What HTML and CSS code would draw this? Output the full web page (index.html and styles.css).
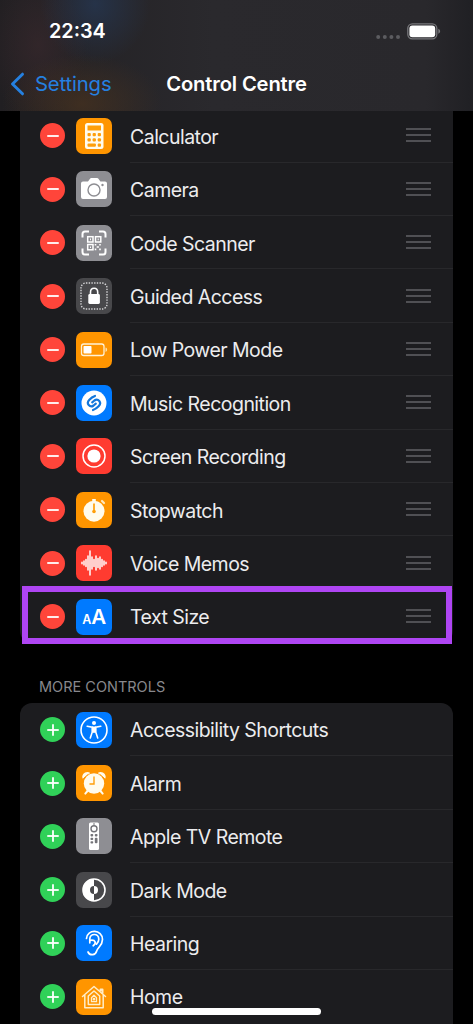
FILE: index.html
```html
<!DOCTYPE html>
<html lang="en-GB">
<head>
<meta charset="utf-8">
<title>Control Centre</title>
<link rel="stylesheet" href="styles.css">
</head>
<body>
<main class="screen">
  <header class="header">
    <div class="status">
      <span class="time">22:34</span>
      <div class="indicators">
        <svg width="24" height="6" viewBox="0 0 24 6" fill="#5c5c60"><circle cx="2.2" cy="3" r="2"/><circle cx="8.8" cy="3" r="2"/><circle cx="15.4" cy="3" r="2"/><circle cx="22" cy="3" r="2"/></svg>
        <svg class="battery" width="34" height="17" viewBox="0 0 34 17"><rect x=".8" y=".8" width="29" height="15" rx="4.5" fill="none" stroke="#77777b" stroke-width="1.3"/><rect x="2.4" y="2.4" width="25.8" height="11.8" rx="3" fill="#fff"/><path d="M31.3 5.8c2.4.8 2.4 4.2 0 5z" fill="#77777b"/></svg>
      </div>
    </div>
    <nav class="nav">
      <a class="back"><svg width="15" height="24" viewBox="0 0 15 24" fill="none" stroke="#2580e0" stroke-width="3" stroke-linecap="round" stroke-linejoin="round"><path d="M12.5 2.2 2.5 12l10 9.8"/></svg><span>Settings</span></a>
      <h1 class="title">Control Centre</h1>
    </nav>
  </header>

  <ul class="list included">
    <li class="row"><i class="badge remove"></i>
      <svg class="icon orange" viewBox="0 0 36 36"><rect x="9" y="5" width="18.500" height="26" rx="2.500" fill="#fffbed"/><g fill="#ff9f0a"><rect x="11.500" y="7.500" width="13.500" height="5"/><rect x="11.500" y="15" width="3.300" height="3.300" rx="1"/><rect x="16.600" y="15" width="3.300" height="3.300" rx="1"/><rect x="21.700" y="15" width="3.300" height="3.300" rx="1"/><rect x="11.500" y="20.200" width="3.300" height="3.300" rx="1"/><rect x="16.600" y="20.200" width="3.300" height="3.300" rx="1"/><rect x="21.700" y="20.200" width="3.300" height="3.300" rx="1"/><rect x="11.500" y="25.400" width="8.400" height="3.300" rx="1"/><rect x="21.700" y="25.400" width="3.300" height="3.300" rx="1"/></g></svg>
      <div class="body"><span>Calculator</span><i class="grip"></i></div></li>
    <li class="row"><i class="badge remove"></i>
      <svg class="icon grey" viewBox="0 0 36 36"><path d="M7 10.500h5l2.200-3q.4-.5 1-.5h6q.6 0 1 .5l2.200 3H29q2 0 2 2V26q0 2-2 2H7q-2 0-2-2V12.500q0-2 2-2z" fill="#fff"/><circle cx="18" cy="19" r="6" fill="#fff" stroke="#8e8e93" stroke-width="1.400"/><circle cx="26.500" cy="14" r="1.200" fill="#8e8e93"/></svg>
      <div class="body"><span>Camera</span><i class="grip"></i></div></li>
    <li class="row"><i class="badge remove"></i>
      <svg class="icon grey" viewBox="0 0 36 36" fill="none" stroke="#fff"><path d="M6.500 12.500V9q0-2.500 2.500-2.500h4M23 6.500h4q2.500 0 2.500 2.500v3.500M29.500 23.500V27q0 2.500-2.500 2.500h-4M13 29.500H9q-2.500 0-2.500-2.500v-3.500" stroke-width="2"/><g stroke-width="1.500"><rect x="11.700" y="11.700" width="5.300" height="5.300"/><rect x="19.500" y="11.700" width="5.300" height="5.300"/><rect x="11.700" y="19.500" width="5.300" height="5.300"/></g><path d="M14 14.400h1M21.700 14.400h1M14 22.200h1M18.700 19.700h1.600M23.200 19.700h1.600M20.700 22h2.200M18.700 24.400h1.600M23.200 24.400h1.600" stroke-width="1.600"/></svg>
      <div class="body"><span>Code Scanner</span><i class="grip"></i></div></li>
    <li class="row"><i class="badge remove"></i>
      <svg class="icon dark" viewBox="0 0 36 36"><rect x="5" y="5" width="26" height="26" rx="5" fill="none" stroke="#d4d4d6" stroke-width="1.400" stroke-dasharray="1.400 1.300"/><rect x="12.300" y="16" width="11.600" height="10" rx="1.400" fill="#fff"/><path d="M14.500 17v-2.800c0-5.300 7.200-5.300 7.200 0V17" fill="none" stroke="#fff" stroke-width="1.600"/></svg>
      <div class="body"><span>Guided Access</span><i class="grip"></i></div></li>
    <li class="row"><i class="badge remove"></i>
      <svg class="icon orange" viewBox="0 0 36 36"><rect x="5.500" y="12" width="22.500" height="11.500" rx="2.300" fill="none" stroke="#fff2d6" stroke-width="1.300"/><rect x="7.500" y="14" width="8" height="7.500" rx=".8" fill="#fff"/><path d="M29.500 15.600c2.200.6 2.200 3.700 0 4.300z" fill="#ffe1a8"/></svg>
      <div class="body"><span>Low Power Mode</span><i class="grip"></i></div></li>
    <li class="row"><i class="badge remove"></i>
      <svg class="icon blue" viewBox="0 0 36 36"><circle cx="18" cy="18" r="12.500" fill="#fff"/><g fill="none" stroke="#1377dc" stroke-width="2.200" stroke-linecap="round"><path d="M19 11c-2.200.8-4 2-5.600 3.700-3.800 4 .6 8.400 4.200 5.800l2.200-1.900"/><path d="M17 25c2.200-.8 4-2 5.600-3.700 3.800-4-.6-8.400-4.200-5.800l-2.200 1.900"/></g></svg>
      <div class="body"><span>Music Recognition</span><i class="grip"></i></div></li>
    <li class="row"><i class="badge remove"></i>
      <svg class="icon red" viewBox="0 0 36 36"><circle cx="18" cy="18" r="11" fill="none" stroke="#fff" stroke-width="1.500"/><circle cx="18" cy="18" r="6.600" fill="#fff"/></svg>
      <div class="body"><span>Screen Recording</span><i class="grip"></i></div></li>
    <li class="row"><i class="badge remove"></i>
      <svg class="icon orange" viewBox="0 0 36 36"><circle cx="18" cy="19.200" r="10.500" fill="#fffbed"/><path d="M16.200 7h3.600v3h-3.600z" fill="#fffbed"/><path d="m26 9 2 2" stroke="#ffe9bf" stroke-width="2.200" stroke-linecap="round"/><path d="M18 11.500v7.500" stroke="#ff9f0a" stroke-width="1.700"/><circle cx="18" cy="19.500" r="1.800" fill="#ff9f0a"/></svg>
      <div class="body"><span>Stopwatch</span><i class="grip"></i></div></li>
    <li class="row"><i class="badge remove"></i>
      <svg class="icon red" viewBox="0 0 36 36"><path d="M6 17.200v1.600M8 16v4M10 14.500v7M12 11v14M14 6v24M16 12v12M18 14.500v7M20 11v14M22 13.500v9M24 12v12M26 14.500v7M28 16v4M30 17.200v1.600" stroke="#fff" stroke-width="1.500" stroke-linecap="round"/></svg>
      <div class="body"><span>Voice Memos</span><i class="grip"></i></div></li>
    <li class="row selected"><i class="badge remove"></i>
      <svg class="icon blue" viewBox="0 0 36 36"><g fill="#fff" font-family="Inter" font-weight="600"><text x="6.200" y="24.800" font-size="12.500">A</text><text x="15.300" y="24.800" font-size="20.500">A</text></g></svg>
      <div class="body"><span>Text Size</span><i class="grip"></i></div></li>
  </ul>

  <h2 class="section">MORE CONTROLS</h2>

  <ul class="list more">
    <li class="row"><i class="badge add"></i>
      <svg class="icon blue" viewBox="0 0 36 36"><circle cx="18" cy="18" r="13" fill="none" stroke="#fff" stroke-width="1.600"/><circle cx="18" cy="11" r="2" fill="#fff"/><path d="M11.200 14.200l5 1v5L14.300 26M24.800 14.200l-5 1v5l1.900 5.800" fill="none" stroke="#fff" stroke-width="1.600" stroke-linecap="round"/><path d="M16 14.500h4v5.800l-2 .6-2-.6z" fill="#fff"/></svg>
      <div class="body"><span>Accessibility Shortcuts</span></div></li>
    <li class="row"><i class="badge add"></i>
      <svg class="icon orange" viewBox="0 0 36 36"><g fill="#fffbed"><circle cx="18" cy="18.500" r="10.200"/><path d="M6.800 13.800c-2.300-4.500 3.700-8.900 7.500-5.800zM29.200 13.800c2.300-4.500-3.700-8.900-7.500-5.800z"/></g><path d="m11.500 26-2.200 2.600M24.500 26l2.200 2.600" stroke="#fffbed" stroke-width="2" stroke-linecap="round"/><path d="M18 11.500V19h-4.500" fill="none" stroke="#ff9f0a" stroke-width="1.400"/><path d="M12.200 9.300 7.500 13.600M23.800 9.300l4.700 4.300" stroke="#ff9500" stroke-width="1"/></svg>
      <div class="body"><span>Alarm</span></div></li>
    <li class="row"><i class="badge add"></i>
      <svg class="icon grey" viewBox="0 0 36 36"><rect x="13" y="4.500" width="10" height="27.500" rx="1.500" fill="#fff"/><circle cx="18" cy="10.800" r="3" fill="none" stroke="#747479" stroke-width="1.400"/><g fill="#747479"><rect x="17.300" y="5.300" width="1.400" height="1.400"/><rect x="14.500" y="16" width="2.700" height="2.400" rx=".8"/><rect x="18.800" y="16" width="2.700" height="2.400" rx=".8"/><rect x="14.500" y="19.700" width="2.700" height="2.400" rx=".8"/><rect x="18.800" y="19.700" width="2.700" height="5.600" rx="1"/><rect x="14.500" y="23.200" width="2.700" height="2.400" rx=".8"/></g></svg>
      <div class="body"><span>Apple TV Remote</span></div></li>
    <li class="row"><i class="badge add"></i>
      <svg class="icon dark" viewBox="0 0 36 36"><circle cx="18" cy="18" r="11" fill="none" stroke="#fff" stroke-width="1.600"/><path d="M18 7a11 11 0 0 0 0 22v-7a4 4 0 0 1 0-8z" fill="#fff"/><path d="M18 14a4 4 0 0 1 0 8z" fill="#fff"/></svg>
      <div class="body"><span>Dark Mode</span></div></li>
    <li class="row"><i class="badge add"></i>
      <svg class="icon blue" viewBox="0 0 36 36" fill="none" stroke="#fff" stroke-width="1.700" stroke-linecap="round"><path d="M10.500 13.500C11 3.800 26.500 4 26.500 14.500c0 6-4.500 7.500-5.800 11.500-1.300 4.500-6.700 5-8.700 1"/><path d="M13.800 17.800v-3.500c0-6.400 9-6.400 9 0 0 2.500-1 3.600-2.300 4.800"/><path d="M17.200 20.800c3.300-2.300 2.600-6.500-3-5.500"/></svg>
      <div class="body"><span>Hearing</span></div></li>
    <li class="row"><i class="badge add"></i>
      <svg class="icon orange" viewBox="0 0 36 36" fill="none" stroke="#ffedc8" stroke-width="1.500" stroke-linecap="round" stroke-linejoin="round"><path d="M6.500 17.500 18 7.500l11.500 10M8.800 16v12.800h18.400V16"/><path d="M24.500 11.500v-1h2V14" stroke-width="2"/><path d="M12.300 25.500V17L18 12l5.700 5v8.500z"/><path d="M15.500 22.700v-4L18 16.300l2.500 2.400v4z" stroke-width="1.300"/><circle cx="18" cy="20.200" r=".6"/></svg>
      <div class="body"><span>Home</span></div></li>
  </ul>
  <div class="home-bar"></div>
</main>
</body>
</html>
```
FILE: styles.css
```css
* { box-sizing: border-box; }
body { margin: 0; background: #000; }
.screen {
  position: relative;
  width: 473px;
  height: 1024px;
  overflow: hidden;
  background: #000;
  color: #ececee;
  font-family: Inter, "Liberation Sans", sans-serif;
}
.header {
  position: relative;
  z-index: 1;
  height: 110.6px;
  background:
    radial-gradient(ellipse 55px 60px at 95px 4px, rgba(38, 56, 84, .75), transparent),
    radial-gradient(ellipse 80px 50px at 82px 104px, rgba(76, 52, 30, .65), transparent),
    radial-gradient(ellipse 50px 75px at 38px 45px, rgba(56, 40, 44, .7), transparent),
    linear-gradient(90deg, #211f22, #2a292d 45%, #29282c 90%, #202024);
}
.status {
  display: flex;
  justify-content: space-between;
  align-items: center;
  height: 62px;
  padding: 0 32px 0 49px;
}
.time { font-size: 19.8px; font-weight: 600; color: #fff; }
.indicators { display: flex; align-items: center; gap: 7px; }
.indicators svg:first-child { margin-top: 11px; }
.nav {
  display: grid;
  grid-template-columns: 1fr auto 1fr;
  align-items: center;
  height: 44px;
}
.back {
  display: flex;
  align-items: center;
  gap: 10px;
  padding-left: 10px;
  color: #2580e0;
  font-size: 20.300px;
  letter-spacing: -.15px;
}
.back span, .title { padding-bottom: 2px; }
.title { margin: 0; color: #fff; font-size: 20.200px; font-weight: 600; letter-spacing: -.15px; }
.list {
  width: 433px;
  margin: 0 0 0 20px;
  padding: 0;
  list-style: none;
  background: #1c1c1f;
}
.included { margin-top: -1.3px; border-radius: 0 0 12px 12px; }
.more { min-height: 322px; border-radius: 12px 12px 0 0; }
.row {
  position: relative;
  display: flex;
  align-items: center;
  height: 53.4px;
  padding-left: 20px;
}
.badge {
  flex: none;
  display: grid;
  place-items: center;
  width: 25px;
  height: 25px;
  margin-right: 11px;
  border-radius: 50%;
}
.badge::before, .badge::after {
  content: "";
  grid-area: 1 / 1;
  width: 12px;
  height: 2px;
  border-radius: 1px;
  background: #fff;
  opacity: .9;
}
.remove { background: #ff453a; }
.remove::after { display: none; }
.add { background: #30d158; }
.add::after { transform: rotate(90deg); }
.icon { flex: none; width: 36px; height: 36px; border-radius: 7px; }
.orange { background: #ff9500; }
.grey { background: #8e8e93; }
.dark { background: #48484b; }
.blue { background: #007aff; }
.red { background: #ff3b30; }
.body {
  flex: 1;
  display: flex;
  align-items: center;
  justify-content: space-between;
  height: 100%;
  margin-left: 18px;
  padding: 2.600px 22px 0 0;
  border-bottom: 1px solid #28282b;
  font-size: 19.5px;
  letter-spacing: -.53px;
  white-space: nowrap;
}
.row:last-child .body { border-bottom-color: transparent; }
.grip {
  width: 25px;
  height: 14px;
  margin-top: -2.600px;
  background: linear-gradient(#505054 2px, transparent 2px 6px, #505054 6px 8px, transparent 8px 12px, #505054 12px);
}
.selected::after {
  content: "";
  position: absolute;
  left: 1.700px;
  right: 1.300px;
  top: -4.200px;
  bottom: -.8px;
  border: 6px solid #af45f3;
}
.section {
  height: 59.800px;
  margin: 0;
  padding: 35px 0 0 39px;
  color: #88888d;
  font-size: 14.500px;
  font-weight: 400;
  line-height: 18px;
  letter-spacing: 0;
}
.home-bar {
  position: absolute;
  left: 152px;
  bottom: 9px;
  width: 169px;
  height: 7px;
  border-radius: 4px;
  background: #fff;
}
```
